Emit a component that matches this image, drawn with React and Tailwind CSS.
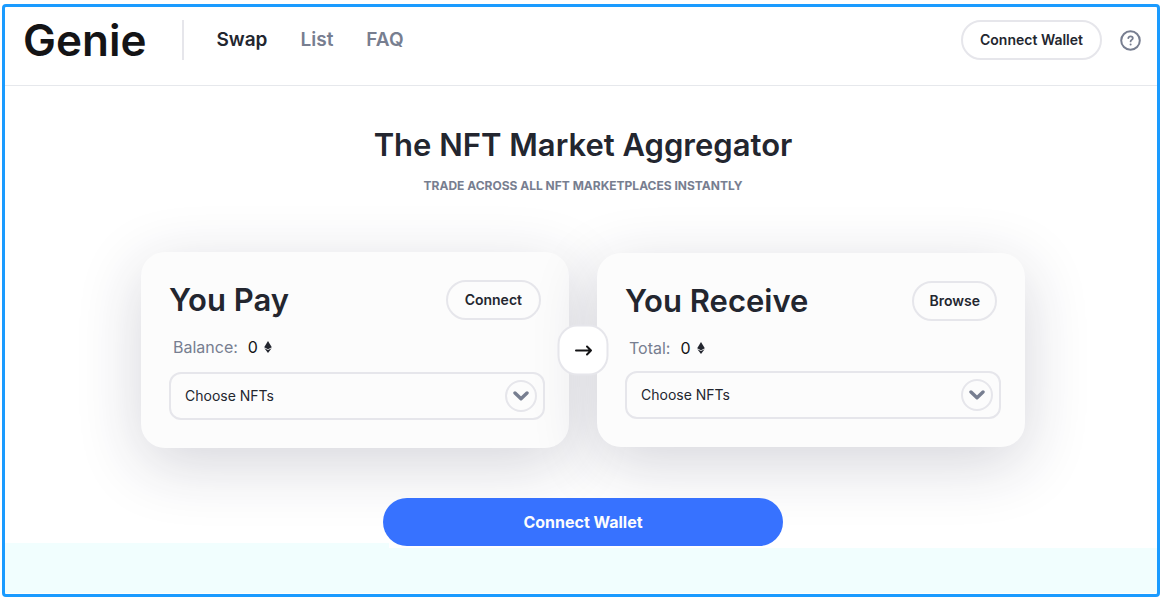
import React, { useState } from "react";

const NAV_LINKS = [
  { name: "Swap", active: true },
  { name: "List", active: false },
  { name: "FAQ", active: false },
];

function OutlineButton({ children, className = "px-[17px]" }) {
  return (
    <button className={`h-10 rounded-full border-2 border-[#e6e6eb] text-sm font-semibold whitespace-nowrap text-[#23262f] ${className}`}>
      {children}
    </button>
  );
}

function EthIcon() {
  return (
    <svg width="8" height="12" viewBox="0 0 8 12" fill="currentColor" aria-hidden="true">
      <path d="M4 0 7.8 6.2 4 8.2.2 6.2z" />
      <path d="M.4 7.2 4 9.1l3.6-1.9L4 12z" />
    </svg>
  );
}

function TradeCard({ title, action, actionClass, label, id, labelClass }) {
  const [collection, setCollection] = useState("");

  return (
    <section className="min-w-0 flex-1 rounded-3xl bg-[#fcfcfc] py-7 pr-6 pl-7 shadow-[0_16px_64px_rgba(31,32,65,0.19)]">
      <div className="flex items-center justify-between pr-1">
        <h2 className="text-[31px] leading-10 font-semibold">{title}</h2>
        <OutlineButton className={actionClass}>{action}</OutlineButton>
      </div>

      <div className={`flex items-center pl-1 leading-6 ${labelClass}`}>
        <span className="text-[#777e90]">{label}</span>
        <span className="mr-1.5 ml-2.5 text-[#141416]">0</span>
        <EthIcon />
      </div>

      <div className="relative">
        <select
          id={id}
          aria-label={`${title} NFTs`}
          value={collection}
          onChange={(e) => setCollection(e.target.value)}
          className="h-12 w-full appearance-none rounded-xl border-2 border-[#e6e6eb] bg-transparent pr-12 pl-3.5 text-sm text-[#23262f]"
        >
          <option value="">Choose NFTs</option>
        </select>
        <span className="pointer-events-none absolute top-2 right-2 flex size-8 items-center justify-center rounded-full border-2 border-[#e6e6eb] text-[#777e90]">
          <svg width="16" height="10" viewBox="0 0 16 10" fill="none" stroke="currentColor" strokeWidth="3.4" strokeLinecap="round" strokeLinejoin="round">
            <path d="M2 2l6 5.8L14 2" />
          </svg>
        </span>
      </div>
    </section>
  );
}

export default function App() {
  return (
    <div className="flex min-h-screen bg-white pt-1 pr-1 pb-0.5 pl-0.5 font-['Inter',sans-serif] text-[#23262f]">
      <div className="flex min-w-0 flex-1 flex-col rounded-sm border-3 border-[#1a9bff]">

        {/* Top bar */}
        <header className="flex items-center border-b border-[#e6e8ec] pt-[13px] pr-4 pb-[25px] pl-[18px]">
          <a href="#" className="text-[44px] leading-10 font-semibold text-[#141416]">Genie</a>
          <div className="mr-8 ml-9 h-10 w-0.5 bg-[#e6e6eb]" />
          <nav className="flex gap-[33px] text-[19px] font-semibold">
            {NAV_LINKS.map((link) => (
              <a key={link.name} href="#" className={link.active ? "text-[#23262f]" : "text-[#777e90]"}>
                {link.name}
              </a>
            ))}
          </nav>
          <div className="ml-auto flex items-center gap-[18px]">
            <OutlineButton>Connect Wallet</OutlineButton>
            <button aria-label="Help" className="text-[#777e90]">
              <svg width="21" height="21" viewBox="0 0 21 21" fill="none" stroke="currentColor" strokeWidth="2" strokeLinecap="round" strokeLinejoin="round">
                <circle cx="10.5" cy="10.5" r="9.3" />
                <path d="M8.3 8.2c.2-1.2 1.1-1.9 2.3-1.9 1.3 0 2.2.8 2.2 1.9 0 1.6-2.2 1.7-2.2 3.2" strokeWidth="1.8" />
                <path d="M10.6 14.4v.1" />
              </svg>
            </button>
          </div>
        </header>

        <main className="relative flex flex-col items-center pt-[39px] pl-1">
          <h1 className="text-[31px] leading-10 font-semibold">The NFT Market Aggregator</h1>
          <p className="mt-[13px] text-xs font-bold text-[#777e90]">TRADE ACROSS ALL NFT MARKETPLACES INSTANTLY</p>

          <div className="relative mt-[58px] flex w-full max-w-[884px] items-center gap-7">
            <TradeCard
              id="pay"
              title="You Pay"
              action="Connect"
              actionClass="px-[17px]"
              label="Balance:"
              labelClass="mt-[15px] mb-[13px]"
            />
            <TradeCard
              id="receive"
              title="You Receive"
              action="Browse"
              actionClass="px-[15px]"
              label="Total:"
              labelClass="mt-[15px] mb-[11px]"
            />
            <button
              aria-label="Switch direction"
              className="absolute top-1/2 left-1/2 flex size-[51px] -translate-x-1/2 -translate-y-1/2 items-center justify-center rounded-[20px] border-2 border-[#e6e6eb] bg-white text-[#141416]"
            >
              <svg width="18" height="12" viewBox="0 0 18 12" fill="none" stroke="currentColor" strokeWidth="2" strokeLinecap="round" strokeLinejoin="round">
                <path d="M1.5 6h15M12.5 2l4 4-4 4" />
              </svg>
            </button>
          </div>

          <button className="relative mt-[50px] h-12 w-full max-w-[400px] rounded-full bg-[#3772ff] font-bold text-[#fcfcfd]">
            Connect Wallet
          </button>
        </main>

        {/* Tinted strip under the form */}
        <div className="-mt-[3px] mb-px flex flex-1">
          <div className="w-1/3 bg-[#f1fefe]" />
          <div className="mt-[5px] flex-1 bg-[#f1fefe]" />
        </div>
      </div>
    </div>
  );
}
